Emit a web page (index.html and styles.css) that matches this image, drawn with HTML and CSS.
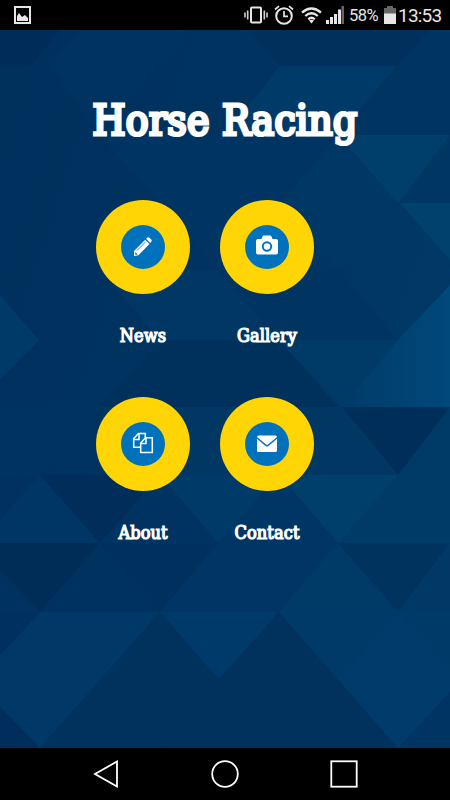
FILE: index.html
```
<!DOCTYPE html>
<html lang="en">
<head>
  <meta charset="UTF-8">
  <meta name="viewport" content="width=device-width, initial-scale=1.0">
  <title>Horse Racing</title>
  <link rel="stylesheet" href="styles.css">
</head>
<body>

<header class="status-bar">
  <svg class="picture" width="17" height="18" viewBox="0 0 17 18">
    <rect x="1" y="1" width="15" height="16" fill="none" stroke="#e6e6e6" stroke-width="2"/>
    <path d="M3 15V10L5 7L8 11L11 9L14 12V15Z" fill="#e6e6e6"/>
  </svg>
  <svg class="vibrate" width="24" height="20" viewBox="0 0 24 20">
    <rect x="7" y="2.5" width="10" height="15" rx="1" fill="none" stroke="#e6e6e6" stroke-width="2"/>
    <path d="M1 7.5v5M3.7 5.5v9M20.3 5.5v9M23 7.5v5" stroke="#d0d0d0" stroke-width="1.6"/>
  </svg>
  <svg class="alarm" width="20" height="20" viewBox="0 0 20 20">
    <circle cx="10" cy="11" r="7.8" fill="none" stroke="#e6e6e6" stroke-width="2"/>
    <path d="M1 4.5L5 1.2M15 1.2L19 4.5M10 6v5.3h4" fill="none" stroke="#e6e6e6" stroke-width="1.7"/>
  </svg>
  <svg class="wifi" width="21" height="17" viewBox="0 0 21 17">
    <path d="M1 5.5Q10.5-2.5 20 5.5M4.2 9Q10.5 3.5 16.8 9M7.3 12.3Q10.5 9.3 13.7 12.3" fill="none" stroke="#e6e6e6" stroke-width="2.3"/>
    <path d="M8 13.5Q10.5 11.8 13 13.5L10.5 16.5Z" fill="#e6e6e6"/>
  </svg>
  <svg class="signal" width="18" height="18" viewBox="0 0 18 18">
    <path d="M0 14h3v4H0zM4 11h3v7H4zM8 8h3v10H8zM12 3.5h3V18h-3z" fill="#e6e6e6"/>
    <path d="M15.5 0H18v18h-2.5z" fill="#666"/>
  </svg>
  <span class="percent">58%</span>
  <svg class="battery" width="12" height="18" viewBox="0 0 12 18">
    <path d="M3 0h6v2h3v6H0V2h3z" fill="#666"/>
    <path d="M0 7.5h12V18H0z" fill="#e6e6e6"/>
  </svg>
  <span class="clock">13:53</span>
</header>

<main class="screen">
  <!-- triangle pattern behind the menu -->
  <svg class="pattern" viewBox="0 30 450 718" preserveAspectRatio="none">
    <defs>
      <linearGradient id="base" x1="0" y1="0" x2="1" y2="0.5">
        <stop offset="0" stop-color="#00305c"/>
        <stop offset="0.5" stop-color="#003361"/>
        <stop offset="1" stop-color="#003a67"/>
      </linearGradient>
      <linearGradient id="light" x1="0" y1="0" x2="1" y2="0">
        <stop offset="0" stop-color="#003b69"/>
        <stop offset="1" stop-color="#00497b"/>
      </linearGradient>
    </defs>
    <rect y="30" width="450" height="718" fill="url(#base)"/>
    <path d="M0 30H60L30 66H0Z" fill="#002c59"/>
    <path d="M50 66L82 30H188L158 66L100 135Z" fill="#003360"/>
    <path d="M250 30H430L397 66H280Z" fill="#00305b"/>
    <path d="M280 66H397L338 135H225Z" fill="#003a69"/>
    <path d="M397 66L430 30H450V135H338Z" fill="#003561"/>
    <path d="M338 135H450L398 203Z" fill="#003e6b"/>
    <path d="M100 135H338L279 203L218 270L160 203Z" fill="#003462"/>
    <path d="M450 142V203H400Z" fill="#003762"/>
    <path d="M400 203H450V260Z" fill="#00416e"/>
    <path d="M338 135L398 203L340 270L280 203Z" fill="#003865"/>
    <path d="M100 270H218L279 340H160Z" fill="#003764"/>
    <path d="M218 270H338L398 340H279Z" fill="#003561"/>
    <path d="M0 295L39 340L0 380Z" fill="#003a69"/>
    <path d="M160 340H279L338 407H100Z" fill="#00305c"/>
    <path d="M279 340H398L342 407Z" fill="#003b68"/>
    <path d="M450 285V407H342L398 340Z" fill="url(#light)"/>
    <path d="M342 407H450L398 475Z" fill="#002e5a"/>
    <path d="M398 475L450 415V543H338Z" fill="#003b68"/>
    <path d="M0 407H100L40 475H0Z" fill="#003361"/>
    <path d="M100 407H342L398 475H160Z" fill="#003763"/>
    <path d="M0 520L40 475L100 543H0Z" fill="#003665"/>
    <path d="M40 475H160L100 543Z" fill="#002d5a"/>
    <path d="M160 475H279L218 543Z" fill="#003a69"/>
    <path d="M160 475L218 543H100Z" fill="#003361"/>
    <path d="M279 475H398L338 543Z" fill="#003f6c"/>
    <path d="M279 475L338 543H218Z" fill="#003665"/>
    <path d="M0 543H100L40 612L0 570Z" fill="#002c58"/>
    <path d="M0 570L40 612H0Z" fill="#003261"/>
    <path d="M100 543L160 612H40Z" fill="#00325f"/>
    <path d="M100 543H218L160 612Z" fill="#00305d"/>
    <path d="M218 543H338L279 612H160Z" fill="#003565"/>
    <path d="M338 543L398 612H279Z" fill="#003b68"/>
    <path d="M338 543H450L398 612Z" fill="#00335e"/>
    <path d="M398 612L450 553V612Z" fill="#003966"/>
    <path d="M40 612H160L40 748L0 707V655Z" fill="#003867"/>
    <path d="M0 612H40L0 655Z" fill="#003060"/>
    <path d="M160 612L279 748H40Z" fill="#00325e"/>
    <path d="M160 612H279L219 679Z" fill="#003a6b"/>
    <path d="M279 612L398 748H160L219 679Z" fill="#00325d"/>
    <path d="M279 612H450V692L398 748L338 679Z" fill="#003a68"/>
    <path d="M338 679L398 612L450 670V692L398 748Z" fill="#003b6b"/>
    <path d="M0 707L40 748H0Z" fill="#002d5b"/>
    <path d="M450 692V748H398Z" fill="#003463"/>
  </svg>

  <h1 class="title">Horse Racing</h1>

  <nav class="menu">
    <a class="item">
      <span class="ring"><span class="dot">
        <svg width="24" height="24" viewBox="0 0 24 24">
          <path d="M3 16L14.2 4.8L18.5 9L7.4 20.2L3 21Z" fill="#fff"/>
          <path d="M15.2 3.8L16.5 2.6Q17.5 2 18.5 2.8L20.4 4.8Q21 5.7 20.4 6.6L19.2 8Z" fill="#fff"/>
          <path d="M6 15.5L14.3 7.2" stroke="#0072bc" stroke-width="0.8"/>
          <path d="M4.4 17.2L6.9 19.5L4.2 19.8Z" fill="#0072bc"/>
        </svg>
      </span></span>
      <span class="label">News</span>
    </a>
    <a class="item">
      <span class="ring"><span class="dot">
        <svg width="24" height="24" viewBox="0 0 24 24">
          <path d="M3 4H6.5L7.5 1.5Q8 .5 9 .5H15Q16 .5 16.5 1.5L17.5 4H21Q23 4 23 6V17.5Q23 19.5 21 19.5H3Q1 19.5 1 17.5V6Q1 4 3 4Z" fill="#fff"/>
          <circle cx="12" cy="11.5" r="4.2" fill="#fff" stroke="#0072bc" stroke-width="1.9"/>
        </svg>
      </span></span>
      <span class="label">Gallery</span>
    </a>
    <a class="item">
      <span class="ring"><span class="dot">
        <svg width="24" height="24" viewBox="0 0 24 24" fill="none" stroke="#fff" stroke-width="1.5">
          <path d="M9.5 15.3H2.7V6.5L7.5 1.5H14.3V6.5M2.7 7.5H8V1.5"/>
          <path d="M9.7 20.5V11L14.5 5.7H21.3V20.5ZM9.7 11.5H15V5.7"/>
        </svg>
      </span></span>
      <span class="label">About</span>
    </a>
    <a class="item">
      <span class="ring"><span class="dot">
        <svg width="24" height="24" viewBox="0 0 24 24">
          <path d="M3.5 3.5H20.5Q22 3.5 22 5L12 13.2L2 5Q2 3.5 3.5 3.5Z" fill="#fff"/>
          <path d="M2 6.8L10.5 14Q12 15.2 13.5 14L22 6.8V18.5Q22 20 20.5 20H3.5Q2 20 2 18.5Z" fill="#fff"/>
        </svg>
      </span></span>
      <span class="label">Contact</span>
    </a>
  </nav>
</main>

<footer class="nav-bar">
  <svg width="26" height="28" viewBox="0 0 26 28"><path d="M24 1.5V26.5L2 14Z"/></svg>
  <svg width="28" height="28" viewBox="0 0 28 28"><circle cx="14" cy="14" r="12.8"/></svg>
  <svg width="28" height="28" viewBox="0 0 28 28"><rect x="1.3" y="1.3" width="25.4" height="25.4"/></svg>
</footer>

</body>
</html>
```
FILE: styles.css
```
* {
  box-sizing: border-box;
}
body {
  margin: 0;
  width: 450px;
  height: 800px;
  display: flex;
  flex-direction: column;
  background: #000;
  color: #fff;
  font-family: "DejaVu Serif Condensed", "DejaVu Serif", serif;
  overflow: hidden;
}
svg {
  display: block;
  flex: none;
}
.status-bar {
  height: 30px;
  display: flex;
  align-items: center;
  padding: 0 9px 0 14px;
  font-family: Roboto, sans-serif;
  color: #e6e6e6;
}
.vibrate {
  margin-left: auto;
  margin-right: 6px;
}
.alarm {
  margin-right: 7px;
}
.wifi {
  margin-right: 4px;
}
.signal {
  margin-right: 5px;
}
.percent {
  width: 35px;
  font-size: 16.5px;
  letter-spacing: -0.5px;
}
.clock {
  width: 43px;
  margin-left: 2px;
  font-size: 19px;
  letter-spacing: -0.8px;
  white-space: nowrap;
}
.screen {
  position: relative;
  height: 718px;
  background: #003461;
}
.pattern {
  position: absolute;
  inset: 0;
  width: 100%;
  height: 100%;
}
.title {
  position: relative;
  margin: 0;
  padding-top: 62px;
  height: 170px;
  font-size: 42px;
  font-weight: normal;
  line-height: 58px;
  letter-spacing: 0.3px;
  text-align: center;
  white-space: nowrap;
  -webkit-text-stroke: 3.2px #fff;
}
.menu {
  position: relative;
  display: grid;
  grid-template-columns: 94px 94px;
  grid-auto-rows: 197px;
  column-gap: 30px;
  padding-left: 96px;
}
.item {
  display: flex;
  flex-direction: column;
  align-items: center;
}
.ring {
  width: 94px;
  height: 94px;
  display: flex;
  align-items: center;
  justify-content: center;
  border-radius: 50%;
  background: #ffd505;
}
.dot {
  width: 44px;
  height: 44px;
  display: flex;
  align-items: center;
  justify-content: center;
  border-radius: 50%;
  background: #0072bc;
}
.label {
  margin-top: 29px;
  font-size: 18px;
  line-height: 25px;
  letter-spacing: 0.1px;
  -webkit-text-stroke: 1.2px #fff;
}
.nav-bar {
  height: 52px;
  display: flex;
  align-items: center;
  justify-content: space-between;
  padding: 0 92px 0 93px;
}
.nav-bar svg {
  fill: none;
  stroke: #fff;
  stroke-width: 1.8;
}
```
